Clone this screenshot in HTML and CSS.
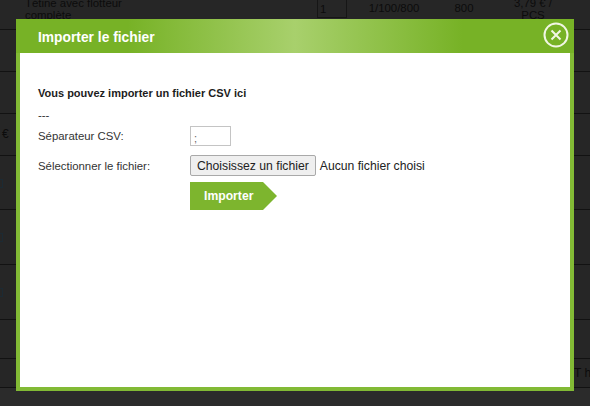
FILE: index.html
```html
<!DOCTYPE html>
<html lang="fr">
<head>
  <meta charset="UTF-8">
  <title>Importer le fichier</title>
  <link rel="stylesheet" href="styles.css">
</head>
<body>

  <!-- Dimmed table behind the popup -->
  <div class="page-table">
    <div class="row row-first">
      <div class="product">Tétine avec flotteur complète</div>
      <div class="qty">1</div>
      <div class="pack">1/100/800</div>
      <div class="count">800</div>
      <div class="price">3,79 € / PCS</div>
    </div>
    <div class="row row-42"></div>
    <div class="row row-42"></div>
    <div class="row row-42 row-euro"><span class="euro">€</span></div>
    <div class="row row-54 row-mark"><span class="mark"></span></div>
    <div class="row row-55 row-mark"><span class="mark"></span></div>
    <div class="row row-55 row-mark"><span class="mark"></span></div>
    <div class="row row-39"></div>
    <div class="row row-29 row-note"><span class="note">T ha</span></div>
  </div>

  <!-- Popup -->
  <div class="popup">
    <div class="popup-header">
      <h2>Importer le fichier</h2>
      <svg class="popup-close" width="26" height="26" viewBox="0 0 26 26">
        <circle cx="13" cy="13" r="11.5" fill="none" stroke="#f1f6e4" stroke-width="2"/>
        <path d="M8.5 8.5L17.5 17.5M17.5 8.5L8.5 17.5" fill="none" stroke="#f1f6e4" stroke-width="2"/>
      </svg>
    </div>
    <div class="popup-body">
      <p class="intro">Vous pouvez importer un fichier CSV ici</p>
      <p class="dashes">---</p>
      <div class="form-row form-row-sep">
        <label class="form-label">Séparateur CSV:</label>
        <input class="sep-input" type="text" value=";">
      </div>
      <div class="form-row form-row-file">
        <label class="form-label">Sélectionner le fichier:</label>
        <button class="file-button" type="button">Choisissez un fichier</button>
        <span class="file-name">Aucun fichier choisi</span>
      </div>
      <div class="submit-row">
        <button class="import-button" type="button">Importer</button>
      </div>
    </div>
  </div>

</body>
</html>
```

FILE: styles.css
```css
body {
  margin: 0;
  height: 406px;
  overflow: hidden;
  position: relative;
  background-color: #2b2b2b;
  font-family: 'Liberation Sans', Arial, sans-serif;
  color: #0c0c0c;
}

/* Table behind the popup */
.page-table {
  height: 406px;
  overflow: hidden;
}

.row {
  box-sizing: border-box;
  border-bottom: 1px solid #121212;
  position: relative;
  font-size: 11.4px;
  background-color: #262626;
}

.row-first {
  height: 30px;
  display: flex;
}

.row-42 { height: 42px; }
.row-54 { height: 54px; }
.row-55 { height: 55px; }
.row-39 { height: 39px; }
.row-29 { height: 29px; }

.product {
  width: 120px;
  margin: -3px 0 0 25px;
  line-height: 12px;
}

.qty {
  box-sizing: border-box;
  width: 30px;
  height: 18px;
  margin-left: 172px;
  padding: 3px 0 0 2px;
  border: 1px solid #161616;
  border-top: 0;
}

.pack, .count, .price {
  text-align: center;
  line-height: 12px;
}

.pack {
  width: 70px;
  margin: 2px 0 0 12px;
}

.count {
  width: 40px;
  margin: 2px 0 0 15px;
}

.price {
  width: 50px;
  margin: -3px 0 0 24px;
}

.euro {
  position: absolute;
  left: 2px;
  top: 13px;
  font-size: 12px;
}

.mark {
  position: absolute;
  left: -5px;
  top: 23px;
  width: 6px;
  height: 7px;
  border: 1px solid #1c2a33;
}

.note {
  position: absolute;
  left: 574px;
  top: 7px;
  font-size: 12px;
  white-space: nowrap;
}

/* Popup */
.popup {
  position: absolute;
  left: 16px;
  top: 19px;
  width: 558px;
  height: 372px;
  box-sizing: border-box;
  padding: 0 4px 4px;
  background-color: #82ba35;
  display: flex;
  flex-direction: column;
}

.popup-header {
  height: 34px;
  margin: 0 -4px;
  padding: 0 5px 0 22px;
  flex-shrink: 0;
  display: flex;
  align-items: center;
  justify-content: space-between;
  background: linear-gradient(to right, #77b226 20%, #a8d06c 50%, #77b226 80%);
}

.popup-header h2 {
  margin: 2px 0 0;
  font-size: 13.8px;
  font-weight: bold;
  color: #fff;
}

.popup-close {
  margin-top: -3px;
}

.popup-body {
  flex: 1;
  background-color: #fff;
  padding: 33px 18px 0;
  font-size: 11.4px;
  color: #333;
}

.intro {
  margin: 0;
  font-size: 11px;
  line-height: 14px;
  font-weight: bold;
  color: #1c1c1c;
}

.dashes {
  margin: 8px 0 0;
  line-height: 14px;
}

.form-row {
  display: flex;
  align-items: center;
}

.form-row-sep {
  margin-top: 4px;
}

.form-row-file {
  margin-top: 9px;
}

.form-label {
  width: 152px;
  flex-shrink: 0;
}

.sep-input {
  box-sizing: border-box;
  width: 41px;
  height: 20px;
  margin: 0;
  padding: 4px 0 0 3px;
  border: 1px solid #c4c4c4;
  font-family: inherit;
  font-size: 11px;
  color: #666;
}

.file-button {
  box-sizing: border-box;
  height: 21px;
  margin: 0;
  padding: 0 6px;
  font-family: inherit;
  font-size: 12.2px;
  color: #222;
  background-color: #efefef;
  border: 1px solid #a9a9a9;
  border-radius: 2px;
}

.file-name {
  margin-left: 4px;
  font-size: 12.2px;
  color: #222;
}

.submit-row {
  margin: 6px 0 0 152px;
}

.import-button {
  display: block;
  width: 87px;
  height: 28px;
  padding: 0 0 0 14px;
  border: 0;
  text-align: left;
  font-family: inherit;
  font-size: 12.2px;
  font-weight: bold;
  color: #fff;
  background-color: #7db52e;
  clip-path: polygon(0 0, 73px 0, 100% 50%, 73px 100%, 0 100%);
}
```
